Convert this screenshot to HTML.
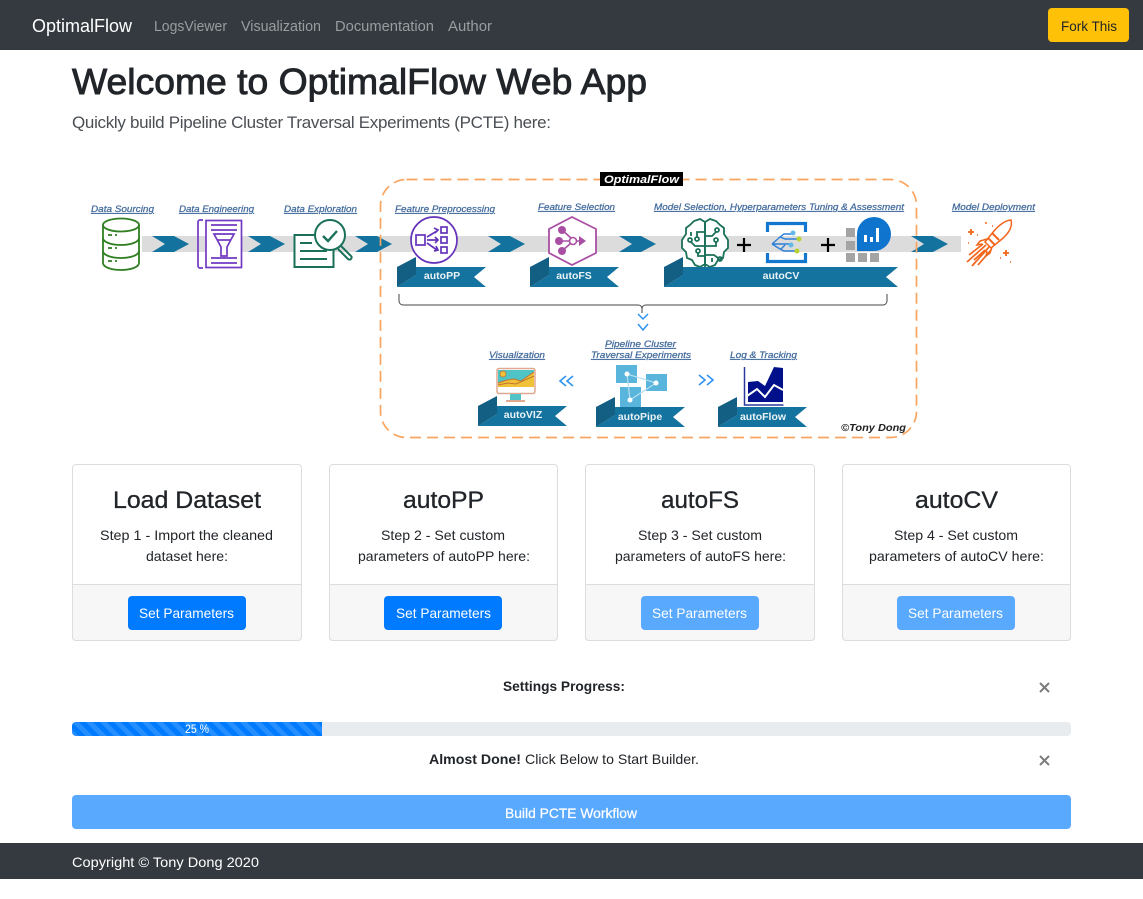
<!DOCTYPE html>
<html lang="en"><head><meta charset="utf-8"><title>OptimalFlow Web App</title>
<style>
html,body{margin:0;padding:0;background:#fff;width:1143px;height:899px;overflow:hidden}
.b{position:absolute;box-sizing:border-box}
.card{background:#fff;border:1px solid #dcdddd;border-radius:4px;top:464px;height:177px}
.cf{background:#f7f7f7;border:1px solid #dcdddd;border-radius:0 0 4px 4px;top:584px;height:57px}
.btn{top:596px;height:34px;width:118px;border-radius:4px;background:#007bff}
.off{background:#59a9ff}
svg{position:absolute;left:0;top:0}
text{font-family:"Liberation Sans",sans-serif}
.t14{font-size:14px;fill:#212529}
.w14{font-size:14px;fill:#fff}
.nav{font-size:15px;fill:#9a9da0}
.h{font-size:24px;fill:#212529;stroke:#212529;stroke-width:.3}
.lab{font-size:9px;font-style:italic;fill:#446c9e;stroke:#446c9e;stroke-width:.25;text-decoration:underline}
.rib{font-size:10.5px;font-weight:bold;fill:#eaf3f7;text-anchor:middle}
</style></head><body>
<div class="b" style="left:0;top:0;width:1143px;height:50px;background:#343a40"></div>
<div class="b" style="left:1048px;top:8px;width:81px;height:34px;background:#ffc107;border-radius:4px"></div>
<div class="b card" style="left:72px;width:230px"></div><div class="b cf" style="left:72px;width:230px"></div>
<div class="b card" style="left:329px;width:229px"></div><div class="b cf" style="left:329px;width:229px"></div>
<div class="b card" style="left:585px;width:230px"></div><div class="b cf" style="left:585px;width:230px"></div>
<div class="b card" style="left:842px;width:229px"></div><div class="b cf" style="left:842px;width:229px"></div>
<div class="b btn" style="left:128px"></div><div class="b btn" style="left:384px"></div>
<div class="b btn off" style="left:641px"></div><div class="b btn off" style="left:897px"></div>
<div class="b" style="left:72px;top:722px;width:999px;height:14px;background:#e9ecef;border-radius:4px"></div>
<div class="b" style="left:72px;top:722px;width:250px;height:14px;border-radius:4px 0 0 4px;background-color:#007bff;background-image:linear-gradient(45deg,rgba(255,255,255,.15) 25%,transparent 25%,transparent 50%,rgba(255,255,255,.15) 50%,rgba(255,255,255,.15) 75%,transparent 75%,transparent);background-size:14px 14px"></div>
<div class="b" style="left:72px;top:795px;width:999px;height:34px;background:#59a9ff;border-radius:4px"></div>
<div class="b" style="left:0;top:843px;width:1143px;height:36px;background:#343a40"></div>

<svg width="1143" height="899" viewBox="0 0 1143 899" style="filter:blur(.3px)">
<defs>
<g id="chev"><polygon points="0,0 22,0 37,8 22,16 0,16 13,8" fill="#13729e"/></g>
<g id="rib"><polygon points="19,10 89,10 77,20 89,30 0,30 19,18" fill="#15739f"/><polygon points="0,10 19,0 19,18 0,30" fill="#125f83"/></g>
</defs>
<rect x="142" y="236" width="819" height="16" fill="#dcdcdc"/>
<use href="#chev" x="152" y="236"/><use href="#chev" x="248" y="236"/><use href="#chev" x="355" y="236"/><use href="#chev" x="488" y="236"/><use href="#chev" x="619" y="236"/><use href="#chev" x="911" y="236"/>
<rect x="380.500" y="179.500" width="536" height="258" rx="26" fill="none" stroke="#f9a560" stroke-width="1.700" stroke-dasharray="11 6"/>
<rect x="600" y="172" width="83" height="14" fill="#000"/>
<text x="604" y="183" font-size="11" font-style="italic" font-weight="bold" fill="#fff" textLength="75" lengthAdjust="spacingAndGlyphs">OptimalFlow</text>

<text class="lab" x="91" y="212" textLength="63" lengthAdjust="spacingAndGlyphs">Data Sourcing</text>
<text class="lab" x="179" y="212" textLength="75" lengthAdjust="spacingAndGlyphs">Data Engineering</text>
<text class="lab" x="284" y="212" textLength="73" lengthAdjust="spacingAndGlyphs">Data Exploration</text>
<text class="lab" x="395" y="212" textLength="100" lengthAdjust="spacingAndGlyphs">Feature Preprocessing</text>
<text class="lab" x="538" y="210" textLength="77" lengthAdjust="spacingAndGlyphs">Feature Selection</text>
<text class="lab" x="654" y="210" textLength="250" lengthAdjust="spacingAndGlyphs">Model Selection, Hyperparameters Tuning &amp; Assessment</text>
<text class="lab" x="952" y="210" textLength="83" lengthAdjust="spacingAndGlyphs">Model Deployment</text>
<text class="lab" x="489" y="358" textLength="56" lengthAdjust="spacingAndGlyphs">Visualization</text>
<text class="lab" x="605" y="347" textLength="71" lengthAdjust="spacingAndGlyphs">Pipeline Cluster</text>
<text class="lab" x="591" y="358" textLength="100" lengthAdjust="spacingAndGlyphs">Traversal Experiments</text>
<text class="lab" x="730" y="358" textLength="67" lengthAdjust="spacingAndGlyphs">Log &amp; Tracking</text>

<!-- cylinder -->
<g fill="none" stroke="#2f7f22" stroke-width="1.800">
<path d="M103 225v38c0 4 8 7 18 7s18-3 18-7v-38" fill="#fff"/><ellipse cx="121" cy="225" rx="18" ry="6.500"/>
<path d="M103 238c0 4 8 7 18 7s18-3 18-7M103 251c0 4 8 7 18 7s18-3 18-7"/>
<path d="M108 235h4M115 235h2M108 248h4M115 248h2M108 261h4M115 261h2"/>
</g>
<!-- funnel doc -->
<g fill="none" stroke="#7239c2" stroke-width="1.700">
<path d="M203 220h-3a2 2 0 0 0-2 2v44a2 2 0 0 0 2 2h3"/><rect x="206" y="220.500" width="35.500" height="47" fill="#fff"/>
<path d="M211 225h26M211 230h26M211 263h26M211 258h26"/>
<path d="M214 234h20l-7 13v9h-6v-9z" fill="#fff"/><path d="M217 240h14"/>
</g>
<!-- explore -->
<g fill="none" stroke="#1a7059" stroke-width="2">
<rect x="294.500" y="235" width="39" height="32" fill="#fff"/>
<path d="M300 251h27M300 259h27M300 243h12" stroke-width="2"/>
<circle cx="330" cy="235" r="15" fill="#fff"/>
<path d="M323 236l5 5 9-10" stroke-width="2.400"/>
<path d="M341 246l10 10a2 2 0 0 1-3 3l-10-10" stroke-width="2"/>
</g>
<!-- preprocess -->
<g fill="none" stroke="#6533ba" stroke-width="1.700">
<circle cx="434" cy="240" r="23" fill="#fff"/>
<rect x="416" y="235" width="9" height="10"/>
<rect x="441" y="227" width="6" height="6"/><rect x="441" y="237" width="6" height="6"/><rect x="441" y="247" width="6" height="6"/>
<path d="M427 237l10-6M427 240h11M427 243l10 7M434 228l4 2-3 3M435 237l3 3-3 3M434 251l4-1-2-4"/>
</g>
<!-- hexagon -->
<g>
<polygon points="572,217 596,229 596,253 572,265 549,253 549,229" fill="#fff" stroke="#a94fa3" stroke-width="1.800"/>
<circle cx="562" cy="230" r="4" fill="#a94fa3"/><circle cx="559" cy="241" r="4" fill="#a94fa3"/><circle cx="562" cy="251" r="4" fill="#a94fa3"/>
<path d="M562 230l9 8M559 241h22M562 251l9-8" stroke="#a94fa3" stroke-width="1.600" fill="none"/>
<circle cx="573" cy="241" r="3.500" fill="#fff" stroke="#a94fa3" stroke-width="1.600"/>
<path d="M579 236l7 5-7 5z" fill="#a94fa3"/>
</g>
<!-- brain -->
<g fill="none" stroke="#1a7059" stroke-width="1.800">
<path d="M705 222l-5-3-6 2-4 4-4 3v6l-4 6v8l4 4 1 6 5 2 3 5 5 2 5-3zM705 222l5-3 6 2 4 4 4 3v6l4 6v8l-4 4-1 6-5 2-3 5-5 2-5-3z" fill="#fff"/>
<path d="M705 222v45"/>
<path d="M705 232h-8v5M705 246h-10l-4-4M705 256h-7v-3M691 232v4"/>
<path d="M705 236h7l4-4M705 246h11v-4M705 255h9l4 3M712 262v-4"/>
<circle cx="697" cy="239" r="2"/><circle cx="690" cy="240" r="2"/><circle cx="698" cy="251" r="2"/><circle cx="717" cy="230" r="2"/><circle cx="716" cy="240" r="2"/><circle cx="720" cy="259" r="2"/>
</g>
<path d="M744 238v14M737 245h14M828 238v14M821 245h14" stroke="#000" stroke-width="2.200"/>
<!-- azure -->
<g>
<path d="M767.500 232v-8.500h38v8.500M767.500 253v8.500h38v-8.500" stroke="#1278cf" stroke-width="3.200" fill="none"/>
<path d="M772 244l8-7 4-3h9M772 244h19M772 244l8 5 4 2h13M780 237l5 2 14 0M781 249l4-4" stroke="#2b7fd8" stroke-width="1.400" fill="none"/>
<circle cx="793" cy="233" r="2.500" fill="#62b9e6"/><circle cx="799" cy="239" r="2.500" fill="#b7d232"/><circle cx="791" cy="245" r="2.500" fill="#62b9e6"/><circle cx="797" cy="251" r="2.500" fill="#b7d232"/>
</g>
<!-- power -->
<g>
<g fill="#a4a4a4"><rect x="846" y="228" width="9" height="9"/><rect x="846" y="241" width="9" height="9"/><rect x="846" y="253" width="9" height="9"/><rect x="858" y="253" width="9" height="9"/><rect x="870" y="253" width="9" height="9"/></g>
<path d="M857 251v-17a17 17 0 1 1 17 17z" fill="#0f74ce"/>
<path d="M864 242v-7h3v7zM870 242v-5h3v5zM876 242v-14h3v14z" fill="#fff"/>
</g>
<!-- rocket -->
<g fill="none" stroke="#f2651a" stroke-width="1.500">
<path d="M1011 220c-5 0-12 5-17 11l-9 11 6 6 11-9c6-5 11-12 9-19z" fill="#fff"/>
<path d="M992 233l7 7M988 238l7 7" stroke-width="2"/>
<path d="M987 239l-7 2-3 4 5-1M992 247l-2 6-4 3 1-5" stroke-width="1.500"/>
<path d="M986 245l-19 17M989 247l-17 19M983 244l-14 11M991 250l-13 15M985 250l-11 10" stroke-width="1.700"/>
<path d="M971 229v6M968 232h6M1006 250v6M1003 253h6" stroke-width="1.800"/>
<path d="M985 223h2M977 235h1M992 226h1M968 243h1M1000 258h1M1010 262h1"/>
</g>
<!-- ribbons -->
<use href="#rib" x="397" y="257"/><text class="rib" x="442" y="279">autoPP</text>
<use href="#rib" x="530" y="257"/><text class="rib" x="574" y="279">autoFS</text>
<g transform="translate(664 257)"><polygon points="19,10 234,10 222,20 234,30 0,30 19,18" fill="#15739f"/><polygon points="0,10 19,0 19,18 0,30" fill="#125f83"/></g><text class="rib" x="781" y="279">autoCV</text>
<path d="M399 294v7a4 4 0 0 0 4 4h235a4 4 0 0 1 4 3 4 4 0 0 1 4-3h237a4 4 0 0 0 4-4v-7M642 308v5" fill="none" stroke="#444" stroke-width="1"/>
<path d="M638 314l5 5 5-5M638 324l5 6 5-6" fill="none" stroke="#2f93f2" stroke-width="1.500"/>
<!-- monitor -->
<rect x="497" y="368.500" width="38" height="25" rx="2" fill="#fff" stroke="#e0a890" stroke-width="1.500"/>
<rect x="498" y="370" width="36" height="17" fill="#4fc3c6"/>
<path d="M498 387v-4l9-3 7-1 7 2 13-9v15z" fill="#f0c23a"/>
<path d="M498 383l9-3 7-1 7 2 13-9M498 385l10-2 8 1 18-8" fill="none" stroke="#c2742e" stroke-width="1"/>
<circle cx="503" cy="374" r="3" fill="#f0c23a" stroke="#c2742e" stroke-width=".7"/>
<rect x="510" y="394" width="11" height="6" fill="#4fc3c6"/><rect x="506" y="400" width="19" height="2" fill="#e0a890"/>
<use href="#rib" x="478" y="396"/><text class="rib" x="523" y="418">autoVIZ</text>
<!-- pipe -->
<rect x="616" y="365" width="21" height="18" fill="#59b5dc"/><rect x="646" y="374" width="21" height="17" fill="#59b5dc"/><rect x="620" y="387" width="21" height="20" fill="#59b5dc"/>
<path d="M627 374l29 9-26 17z" fill="none" stroke="#b4dff0" stroke-width="1.200"/>
<circle cx="627" cy="374" r="2.500" fill="#fff"/><circle cx="656" cy="383" r="2.500" fill="#fff"/><circle cx="630" cy="400" r="2.500" fill="#fff"/>
<use href="#rib" x="596" y="397"/><text class="rib" x="640" y="420">autoPipe</text>
<!-- flow -->
<path d="M744.500 367v38h39" fill="none" stroke="#2a3a9b" stroke-width="1.500"/>
<path d="M748 382l10-1 7 5 9-19 9 1v34h-35z" fill="#00108a"/>
<path d="M747 396l10-7 8 8 9-12 9 5" fill="none" stroke="#fff" stroke-width="2"/>
<use href="#rib" x="718" y="397"/><text class="rib" x="763" y="420">autoFlow</text>
<path d="M566 376l-6 5 6 5M573 376l-6 5 6 5M699 375l6 5-6 5M707 375l6 5-6 5" fill="none" stroke="#2f93f2" stroke-width="1.600"/>
<text x="841" y="431" font-size="10" font-style="italic" font-weight="bold" fill="#222" textLength="65" lengthAdjust="spacingAndGlyphs">©Tony Dong</text>
</svg>

<svg width="1143" height="899" viewBox="0 0 1143 899">
<text x="32" y="32" font-size="18" fill="#fff" textLength="100" lengthAdjust="spacingAndGlyphs">OptimalFlow</text>
<text class="nav" x="154" y="31" textLength="73" lengthAdjust="spacingAndGlyphs">LogsViewer</text>
<text class="nav" x="241" y="31" textLength="80" lengthAdjust="spacingAndGlyphs">Visualization</text>
<text class="nav" x="335" y="31" textLength="99" lengthAdjust="spacingAndGlyphs">Documentation</text>
<text class="nav" x="448" y="31" textLength="44" lengthAdjust="spacingAndGlyphs">Author</text>
<text x="1061" y="31" font-size="14" fill="#212529" textLength="56" lengthAdjust="spacingAndGlyphs">Fork This</text>
<text x="72" y="94" font-size="36" fill="#212529" stroke="#212529" stroke-width=".9" textLength="575" lengthAdjust="spacingAndGlyphs">Welcome to OptimalFlow Web App</text>
<text x="72" y="128" font-size="17" fill="#4a4f54" textLength="479" lengthAdjust="spacing">Quickly build Pipeline Cluster Traversal Experiments (PCTE) here:</text>

<text class="h" x="113" y="508" textLength="148" lengthAdjust="spacingAndGlyphs">Load Dataset</text>
<text class="h" x="403" y="508" textLength="81" lengthAdjust="spacingAndGlyphs">autoPP</text>
<text class="h" x="661" y="508" textLength="78" lengthAdjust="spacingAndGlyphs">autoFS</text>
<text class="h" x="915" y="508" textLength="83" lengthAdjust="spacingAndGlyphs">autoCV</text>

<text class="t14" x="100" y="540" textLength="173" lengthAdjust="spacingAndGlyphs">Step 1 - Import the cleaned</text>
<text class="t14" x="146" y="561" textLength="82" lengthAdjust="spacingAndGlyphs">dataset here:</text>
<text class="t14" x="381" y="540" textLength="124" lengthAdjust="spacingAndGlyphs">Step 2 - Set custom</text>
<text class="t14" x="358" y="561" textLength="172" lengthAdjust="spacingAndGlyphs">parameters of autoPP here:</text>
<text class="t14" x="638" y="540" textLength="124" lengthAdjust="spacingAndGlyphs">Step 3 - Set custom</text>
<text class="t14" x="615" y="561" textLength="171" lengthAdjust="spacingAndGlyphs">parameters of autoFS here:</text>
<text class="t14" x="894" y="540" textLength="124" lengthAdjust="spacingAndGlyphs">Step 4 - Set custom</text>
<text class="t14" x="869" y="561" textLength="175" lengthAdjust="spacingAndGlyphs">parameters of autoCV here:</text>

<text class="w14" x="139" y="618" textLength="95" lengthAdjust="spacingAndGlyphs">Set Parameters</text>
<text class="w14" x="396" y="618" textLength="95" lengthAdjust="spacingAndGlyphs">Set Parameters</text>
<text class="w14" x="652" y="618" textLength="95" lengthAdjust="spacingAndGlyphs">Set Parameters</text>
<text class="w14" x="908" y="618" textLength="95" lengthAdjust="spacingAndGlyphs">Set Parameters</text>

<text class="t14" x="503" y="691" font-weight="bold" textLength="122" lengthAdjust="spacingAndGlyphs">Settings Progress:</text>
<path d="M1040 683l9 9M1049 683l-9 9M1040 756l9 9M1049 756l-9 9" stroke="#7b7c7d" stroke-width="2" fill="none"/>
<text x="185" y="733" font-size="11.500" fill="#fff" textLength="24" lengthAdjust="spacingAndGlyphs">25 %</text>
<text class="t14" x="429" y="764" font-weight="bold" textLength="92" lengthAdjust="spacingAndGlyphs">Almost Done!</text>
<text class="t14" x="525" y="764" textLength="174" lengthAdjust="spacingAndGlyphs">Click Below to Start Builder.</text>
<text class="w14" x="505" y="818" textLength="132" lengthAdjust="spacingAndGlyphs" stroke="#fff" stroke-width=".25">Build PCTE Workflow</text>
<text class="w14" x="72" y="867" textLength="187" lengthAdjust="spacingAndGlyphs">Copyright © Tony Dong 2020</text>
</svg>
</body></html>
